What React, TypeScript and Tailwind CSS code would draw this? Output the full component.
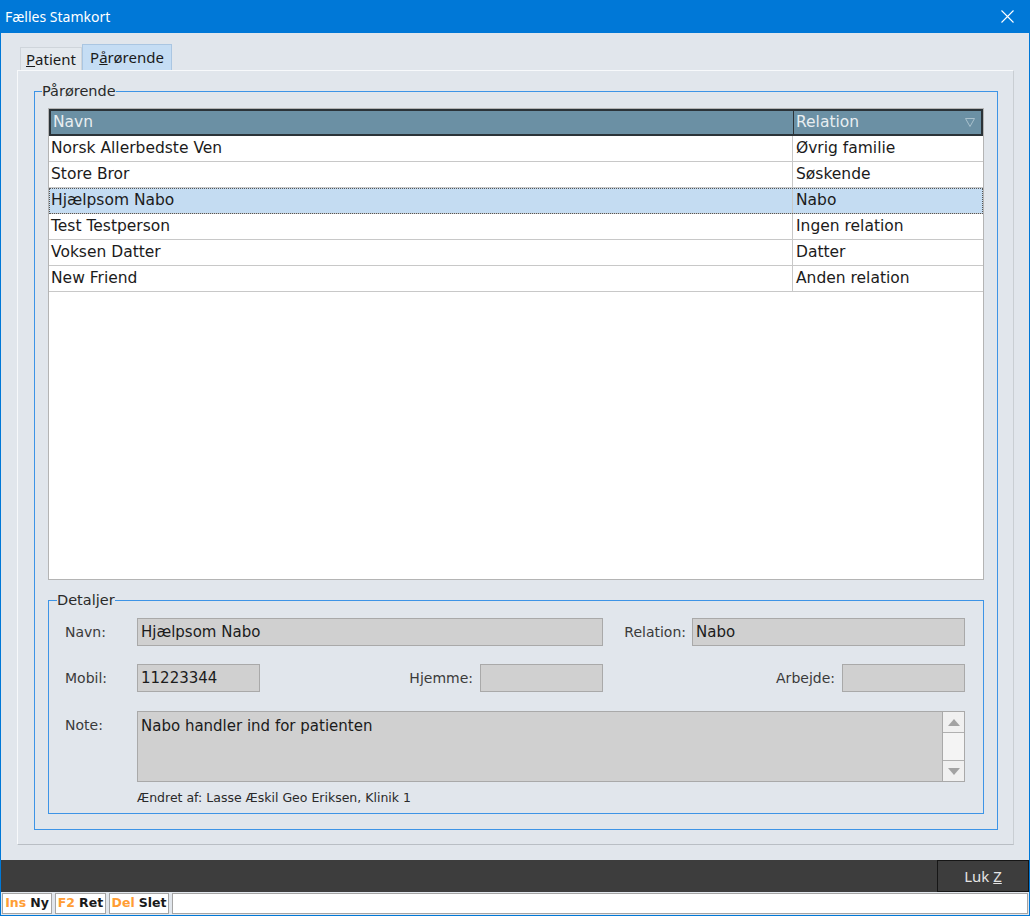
import React from "react";

type Row = { navn: string; relation: string };

const rows: Row[] = [
	{ navn: "Norsk Allerbedste Ven", relation: "Øvrig familie" },
	{ navn: "Store Bror", relation: "Søskende" },
	{ navn: "Hjælpsom Nabo", relation: "Nabo" },
	{ navn: "Test Testperson", relation: "Ingen relation" },
	{ navn: "Voksen Datter", relation: "Datter" },
	{ navn: "New Friend", relation: "Anden relation" },
];

const selected = 2;

const verdana = { fontFamily: '"DejaVu Sans", Verdana, sans-serif' };
const segoe = { fontFamily: '"Noto Sans", "Open Sans", sans-serif' };

const Field: React.FC<{ width: string; value?: string }> = ({ width, value }) => (
	<div
		className={`${width} h-[28px] bg-[#d0d0d0] border border-[#a9a9a9] flex items-center px-[3px] text-[15px] text-[#1b1b1b]`}>
		{value}
	</div>
);

const Label: React.FC<{ className?: string; children: React.ReactNode }> = ({ className, children }) => (
	<div className={`text-[14px] text-[#3a3a3a] ${className ?? ""}`}>{children}</div>
);

const KeyHint: React.FC<{ k: string; label: string; width: string }> = ({ k, label, width }) => (
	<div className={`${width} h-[21px] bg-white border border-[#a5a5a5] flex items-center justify-center gap-[4px]`}>
		<span className="text-[#ff9d34]">{k}</span>
		<span className="text-[#1a1a1a]">{label}</span>
	</div>
);

const App: React.FC = () => {
	return (
		<div
			className="w-[1030px] h-[916px] flex flex-col bg-[#e1e6ec] border-x border-b border-[#0078d7] overflow-hidden"
			style={verdana}>
			{/* title bar */}
			<div className="h-[33px] shrink-0 bg-[#0078d7] flex items-center justify-between pl-[4px] pr-[15px] text-white">
				<span className="text-[14px]" style={segoe}>
					Fælles Stamkort
				</span>
				<svg width="13" height="13" viewBox="0 0 13 13">
					<path d="M0.5 0.5 L12.5 12.5 M12.5 0.5 L0.5 12.5" stroke="white" strokeWidth="1.1" />
				</svg>
			</div>

			{/* tabs */}
			<div className="flex items-end pl-[19px] pt-[11px] h-[37px] shrink-0" style={segoe}>
				<div className="h-[23px] w-[62px] flex items-center justify-center border border-b-0 border-[#cfd5db] bg-[#e4e9ee] text-[15px] text-[#1a1a1a]">
					<span>
						<span className="underline">P</span>atient
					</span>
				</div>
				<div className="h-[26px] w-[90px] flex items-center justify-center border border-b-0 border-[#aac6e2] bg-[#c5ddf4] text-[15px] text-[#1a1a1a]">
					<span>
						P<span className="underline">å</span>rørende
					</span>
				</div>
			</div>

			{/* tab panel */}
			<div className="ml-[16px] w-[997px] h-[775px] shrink-0 border border-[#f7f9fb] border-r-[#c9ced3] border-b-[#b9bec4] px-[16px] pt-[13px]">
				<fieldset className="w-[964px] h-[746px] border border-[#3d94e6] px-[13px] pt-[10px]">
					<legend className="-ml-[6px] px-0 text-[14.5px] text-[#2a2a2a] leading-[14px]">Pårørende</legend>

					{/* table */}
					<div className="w-[936px] h-[472px] bg-white border border-[#b4b4b4] flex flex-col">
						<div className="h-[27px] shrink-0 flex bg-[#6b90a4] border-2 border-[#2b3338] text-[15.5px] text-[#e8eef1]">
							<div className="w-[743px] border-r border-[#2b3338] flex items-center pl-[2px]">Navn</div>
							<div className="flex-1 flex items-center justify-between pl-[2px] pr-[6px]">
								<span>Relation</span>
								<svg width="10" height="9" viewBox="0 0 10 9">
									<path d="M0.5 0.5 L9.5 0.5 L5 8.5 Z" fill="none" stroke="#a9c0cc" strokeWidth="1" />
								</svg>
							</div>
						</div>
						{rows.map((row, i) => (
							<div
								key={row.navn}
								className={`h-[26px] shrink-0 flex text-[15.5px] text-[#1b1b1b] border-b border-[#c8c8c8] ${
									i === selected ? "bg-[#c4dcf2] outline outline-1 outline-dotted outline-[#555] -outline-offset-1" : ""
								}`}>
								<div className="w-[744px] border-r border-[#c8c8c8] flex items-center pl-[2px]">{row.navn}</div>
								<div className="flex-1 flex items-center pl-[3px]">{row.relation}</div>
							</div>
						))}
					</div>

					{/* details */}
					<fieldset className="mt-[13px] w-[936px] h-[221px] border border-[#3d94e6] pl-[16px] pt-[11px]">
						<legend className="-ml-[8px] px-0 text-[14.5px] text-[#2a2a2a] leading-[14px]">Detaljer</legend>

						<div className="flex items-center">
							<Label className="w-[72px]">Navn:</Label>
							<Field width="w-[466px]" value="Hjælpsom Nabo" />
							<Label className="w-[89px] text-right pr-[6px]">Relation:</Label>
							<Field width="w-[273px]" value="Nabo" />
						</div>

						<div className="flex items-center mt-[18px]">
							<Label className="w-[72px]">Mobil:</Label>
							<Field width="w-[123px]" value="11223344" />
							<Label className="w-[220px] text-right pr-[7px]">Hjemme:</Label>
							<Field width="w-[123px]" />
							<Label className="w-[239px] text-right pr-[7px]">Arbejde:</Label>
							<Field width="w-[123px]" />
						</div>

						<div className="flex items-start mt-[19px]">
							<Label className="w-[72px] pt-[4px]">Note:</Label>
							<div className="w-[828px] h-[71px] bg-[#d0d0d0] border border-[#a9a9a9] flex">
								<div className="flex-1 px-[3px] pt-[3px] text-[15px] text-[#1b1b1b]">
									Nabo handler ind for patienten
								</div>
								<div className="w-[22px] flex flex-col border-l border-[#a9a9a9] bg-[#f4f4f4]">
									<div className="h-[21px] bg-[#f0f0f0] border-b border-[#b0b0b0] flex items-center justify-center">
										<svg width="12" height="7" viewBox="0 0 12 7">
											<path d="M0 7 L6 0 L12 7 Z" fill="#a3a3a3" />
										</svg>
									</div>
									<div className="flex-1" />
									<div className="h-[21px] bg-[#f0f0f0] border-t border-[#b0b0b0] flex items-center justify-center">
										<svg width="12" height="7" viewBox="0 0 12 7">
											<path d="M0 0 L6 7 L12 0 Z" fill="#a3a3a3" />
										</svg>
									</div>
								</div>
							</div>
						</div>

						<div className="ml-[72px] mt-[7px] text-[12.5px] text-[#2a2a2a]">
							Ændret af: Lasse Æskil Geo Eriksen, Klinik 1
						</div>
					</fieldset>
				</fieldset>
			</div>

			<div className="flex-1" />

			{/* dark action bar */}
			<div className="h-[32px] shrink-0 bg-[#3d3d3d] flex justify-end items-stretch">
				<div
					className="w-[92px] border border-[#161616] flex items-center justify-center text-[15px] text-[#e4e4e4]"
					style={segoe}>
					Luk&nbsp;<span className="underline">Z</span>
				</div>
			</div>

			{/* footer */}
			<div className="h-[23px] shrink-0 flex items-center gap-[3px] pl-[1px] pr-[1px] bg-[#e1e6ec] text-[12.5px] font-bold">
				<KeyHint k="Ins" label="Ny" width="w-[50px]" />
				<KeyHint k="F2" label="Ret" width="w-[51px]" />
				<KeyHint k="Del" label="Slet" width="w-[60px]" />
				<div className="h-[21px] flex-1 bg-white border border-[#a5a5a5]" />
			</div>
		</div>
	);
};

export default App;
